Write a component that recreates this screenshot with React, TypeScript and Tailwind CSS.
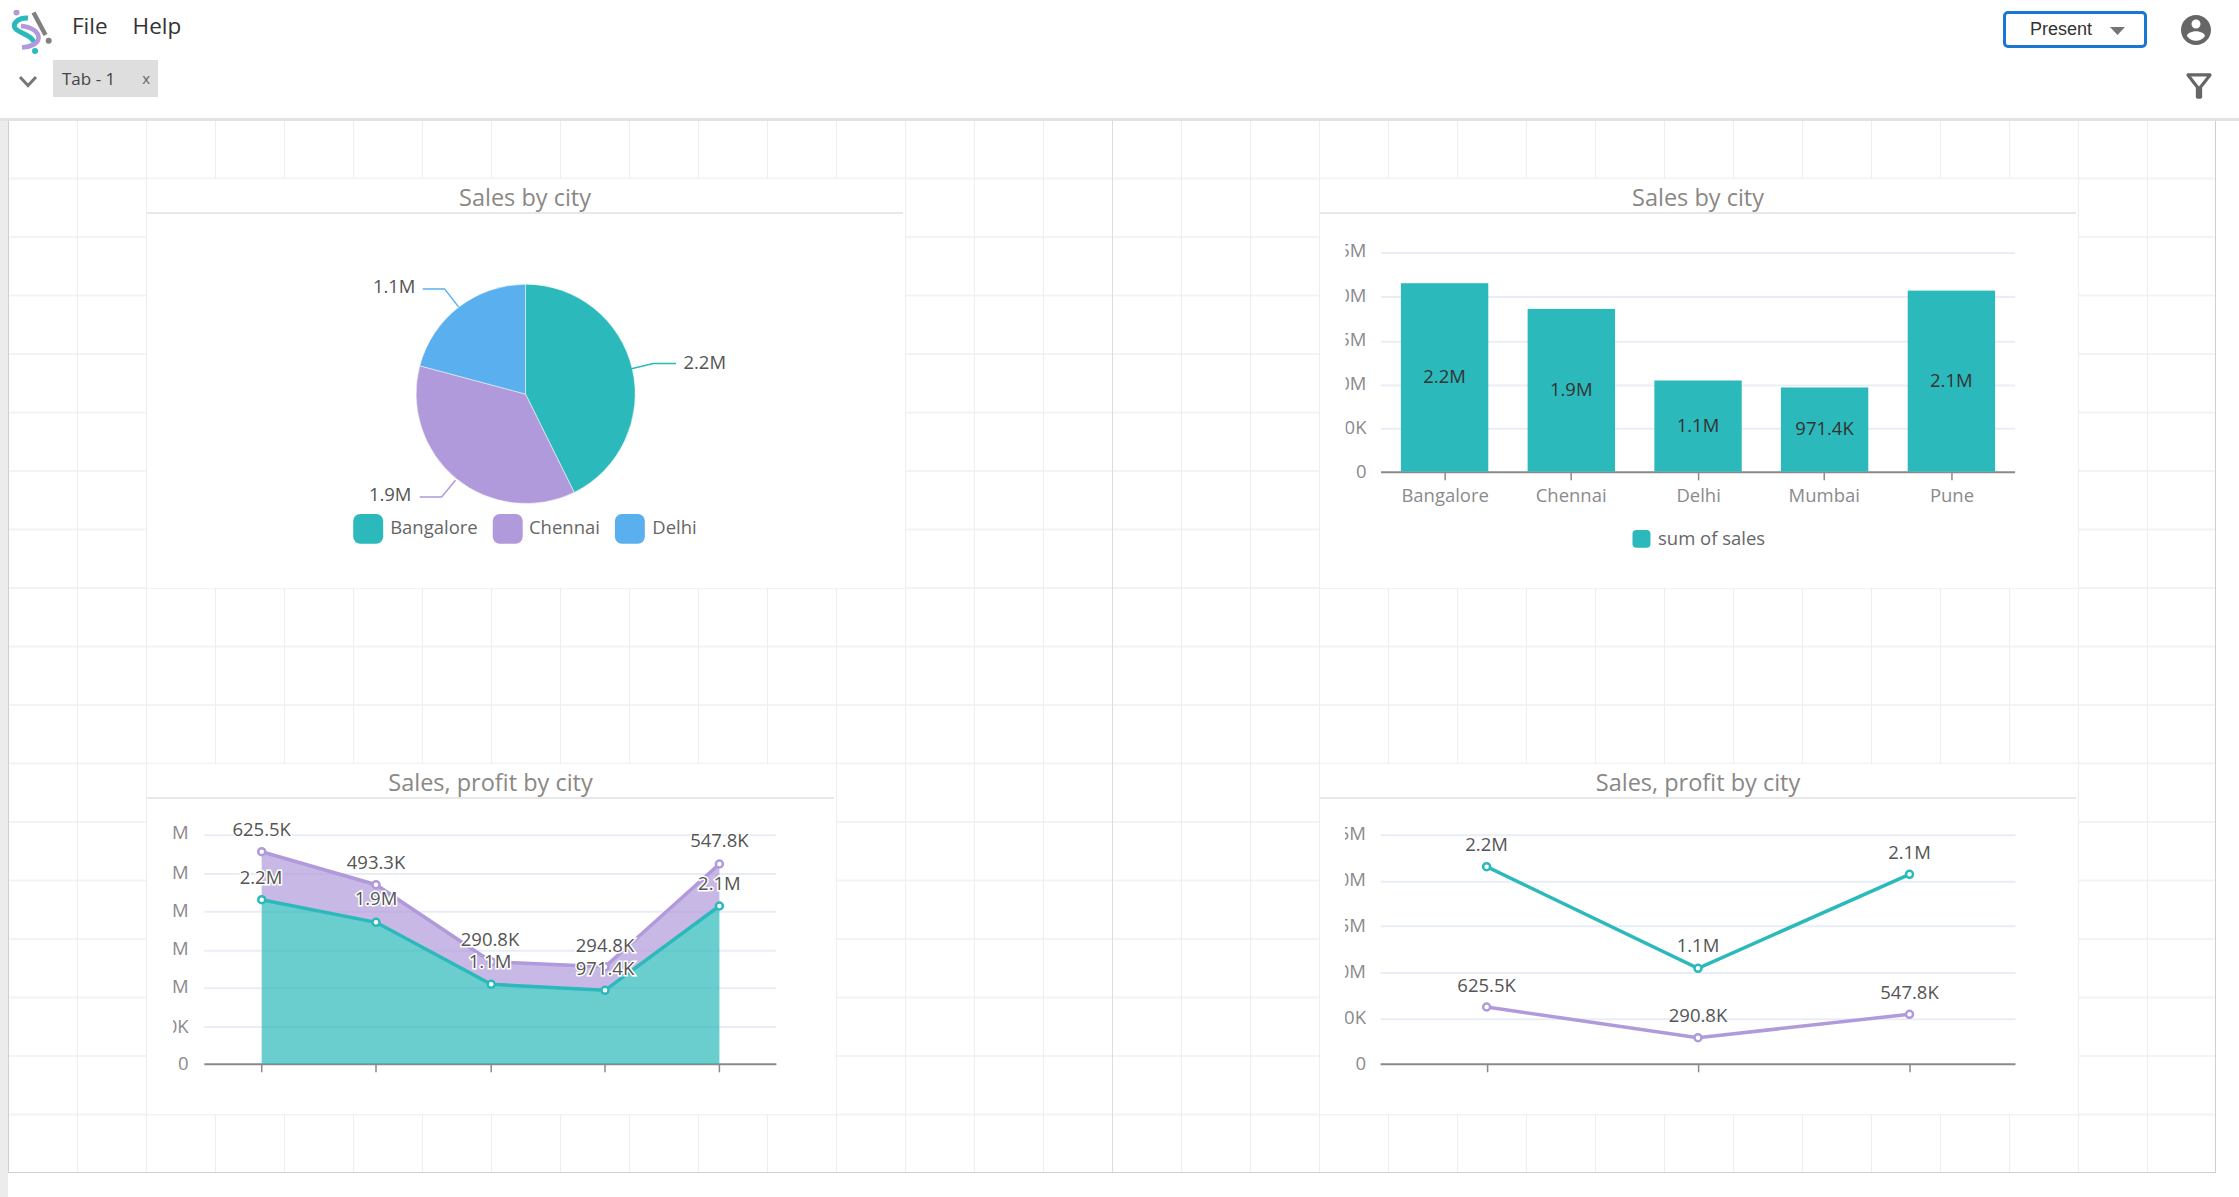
import React from 'react';

const TEAL = '#2bb9bb';
const PURPLE = '#b09adb';
const BLUE = '#5ab0ef';

type Pt = [number, number];

// Chart text, centred on the measured point by default
const Label: React.FC<{
    x: number;
    y: number;
    children: React.ReactNode;
    anchor?: 'start' | 'middle' | 'end';
    className?: string;
}> = ({ x, y, children, anchor = 'middle', className = 'fill-[#555]' }) => (
    <text x={x} y={y - 0.7} textAnchor={anchor} dominantBaseline="central" className={`text-[18.5px] ${className}`}>
        {children}
    </text>
);

// Label over the series with a white outline around the glyphs
const HaloLabel: React.FC<{ x: number; y: number; children: React.ReactNode }> = ({ x, y, children }) => (
    <text
        x={x}
        y={y - 0.7}
        textAnchor="middle"
        dominantBaseline="central"
        className="text-[18.5px] fill-[#555] stroke-white stroke-[3px] [paint-order:stroke]"
    >
        {children}
    </text>
);

const Card: React.FC<{
    title: string;
    className: string;
    box: [number, number, number, number];
    children: React.ReactNode;
}> = ({ title, className, box, children }) => (
    <div className={`flex flex-col bg-white mr-px mb-px ${className}`}>
        <div className="h-[35px] shrink-0 flex items-center justify-center border-b-2 border-[#e8e8e8] mr-[2px]">
            <span className="text-[23.5px] font-medium leading-none text-[#8a8784] mt-[5px]">{title}</span>
        </div>
        <svg className="block" width={box[2]} height={box[3]} viewBox={box.join(' ')}>
            {children}
        </svg>
    </div>
);

const Axis: React.FC<{ x1: number; x2: number; y: number; ticks: number[]; grid: number[] }> = ({ x1, x2, y, ticks, grid }) => (
    <g>
        {grid.map(g => (
            <line key={g} x1={x1} x2={x2} y1={g} y2={g} stroke="#e9edf6" strokeWidth={2} />
        ))}
        <line x1={x1} x2={x2} y1={y} y2={y} stroke="#8a8a8e" strokeWidth={2} />
        {ticks.map(t => (
            <line key={t} x1={t} x2={t} y1={y} y2={y + 8} stroke="#8a8a8e" strokeWidth={1.5} />
        ))}
    </g>
);

const Series: React.FC<{ points: Pt[]; color: string }> = ({ points, color }) => (
    <g>
        <polyline points={points.map(p => p.join(',')).join(' ')} fill="none" stroke={color} strokeWidth={3.5} />
        {points.map(p => (
            <circle key={p[0]} cx={p[0]} cy={p[1]} r={3.5} fill="#fff" stroke={color} strokeWidth={2.5} />
        ))}
    </g>
);

const PieCard = () => (
    <Card title="Sales by city" className="col-start-3 col-span-11 row-start-2 row-span-7" box={[147, 214, 758, 374]}>
        <path d="M525.5 394.3 L525.5 284.3 A110 110 0 0 1 574.3 492.8 Z" fill={TEAL} stroke="#fff" strokeWidth={0.5} />
        <path d="M525.5 394.3 L574.3 492.8 A110 110 0 0 1 419.6 366 Z" fill={PURPLE} stroke="#fff" strokeWidth={0.5} />
        <path d="M525.5 394.3 L419.6 366 A110 110 0 0 1 525.5 284.3 Z" fill={BLUE} stroke="#fff" strokeWidth={0.5} />
        <polyline points="422.6,289 444.5,289 458.4,307" fill="none" stroke={BLUE} strokeWidth={1.5} />
        <polyline points="631.6,369 653.4,363.7 676.3,363.7" fill="none" stroke={TEAL} strokeWidth={1.5} />
        <polyline points="419.6,497.3 441.5,497.3 455.4,480.7" fill="none" stroke={PURPLE} strokeWidth={1.5} />
        <Label x={394} y={286.7}>1.1M</Label>
        <Label x={705} y={362.3}>2.2M</Label>
        <Label x={390} y={495}>1.9M</Label>
        <rect x={353} y={514.3} width={30} height={30} rx={7} fill={TEAL} />
        <Label x={390} y={528} anchor="start" className="fill-[#666]">Bangalore</Label>
        <rect x={492.7} y={514.3} width={30} height={30} rx={7} fill={PURPLE} />
        <Label x={529} y={528} anchor="start" className="fill-[#666]">Chennai</Label>
        <rect x={615} y={514.3} width={30} height={30} rx={7} fill={BLUE} />
        <Label x={652.5} y={528} anchor="start" className="fill-[#666]">Delhi</Label>
    </Card>
);

const bars = [
    { name: 'Bangalore', x: 1400.5, top: 283.3, tick: 1444.8, value: '2.2M', labelY: 376 },
    { name: 'Chennai', x: 1527.4, top: 309, tick: 1571, value: '1.9M', labelY: 389 },
    { name: 'Delhi', x: 1654.3, top: 380.7, tick: 1698.6, value: '1.1M', labelY: 425.3 },
    { name: 'Mumbai', x: 1781, top: 387.7, tick: 1824.4, value: '971.4K', labelY: 428.3 },
    { name: 'Pune', x: 1908, top: 290.7, tick: 1952.3, value: '2.1M', labelY: 380 },
];

const BarCard = () => (
    <Card title="Sales by city" className="col-start-20 col-span-11 row-start-2 row-span-7" box={[1320, 214, 758, 374]}>
        <defs>
            <clipPath id="bar-y">
                <rect x={1345} y={214} width={40} height={300} />
            </clipPath>
        </defs>
        <Axis x1={1380.6} x2={2015.5} y={472.7} ticks={bars.map(b => b.tick)} grid={[253, 297, 342, 385.7, 429]} />
        <g clipPath="url(#bar-y)">
            <Label x={1366} y={250.7} anchor="end" className="fill-[#8a8a8e]">2.5M</Label>
            <Label x={1366} y={295.7} anchor="end" className="fill-[#8a8a8e]">2.0M</Label>
            <Label x={1366} y={339} anchor="end" className="fill-[#8a8a8e]">1.5M</Label>
            <Label x={1366} y={383} anchor="end" className="fill-[#8a8a8e]">1.0M</Label>
            <Label x={1366} y={427.7} anchor="end" className="fill-[#8a8a8e]">500.0K</Label>
            <Label x={1366} y={471.7} anchor="end" className="fill-[#8a8a8e]">0</Label>
        </g>
        {bars.map(b => (
            <g key={b.name}>
                <rect x={b.x} y={b.top} width={87.5} height={472 - b.top} fill={TEAL} />
                <Label x={b.x + 43.7} y={b.labelY} className="fill-[#333]">{b.value}</Label>
                <Label x={b.tick} y={495.7} className="fill-[#8a8a8e]">{b.name}</Label>
            </g>
        ))}
        <rect x={1632.4} y={530.3} width={18} height={18} rx={4} fill={TEAL} />
        <Label x={1658} y={538.3} anchor="start" className="fill-[#666]">sum of sales</Label>
    </Card>
);

const areaTeal: Pt[] = [[261.7, 899.7], [376, 922.3], [491.2, 984.3], [605, 990.3], [719.4, 906]];
const areaPurple: Pt[] = [[261.7, 851.7], [376, 884.7], [491.2, 961.7], [605, 966.7], [719.4, 864]];

const toPoints = (pts: Pt[]) => pts.map(p => p.join(',')).join(' ');

const AreaCard = () => (
    <Card title="Sales, profit by city" className="col-start-3 col-span-10 row-start-12 row-span-6" box={[147, 799, 689, 315]}>
        <defs>
            <clipPath id="area-y">
                <rect x={173} y={799} width={30} height={300} />
            </clipPath>
            <clipPath id="area-plot">
                <rect x={147} y={823} width={689} height={290} />
            </clipPath>
        </defs>
        <Axis x1={204.3} x2={776.4} y={1064.3} ticks={areaTeal.map(p => p[0])} grid={[835.3, 874, 911.7, 950.7, 988.3, 1027]} />
        <g clipPath="url(#area-y)">
            {[['3.0M', 832], ['2.5M', 871.7], ['2.0M', 910], ['1.5M', 947.7], ['1.0M', 986], ['500.0K', 1025.7], ['0', 1062.7]].map(([t, y]) => (
                <Label key={t} x={188.7} y={Number(y)} anchor="end" className="fill-[#8a8a8e]">{t}</Label>
            ))}
        </g>
        <polygon points={`${toPoints(areaPurple)} ${toPoints([...areaTeal].reverse())}`} fill={PURPLE} fillOpacity={0.7} />
        <polygon points={`${toPoints(areaTeal)} 719.4,1064 261.7,1064`} fill={TEAL} fillOpacity={0.7} />
        <Series points={areaPurple} color={PURPLE} />
        <Series points={areaTeal} color={TEAL} />
        <g clipPath="url(#area-plot)">
            <HaloLabel x={261.7} y={829}>625.5K</HaloLabel>
            <HaloLabel x={261} y={876.7}>2.2M</HaloLabel>
            <HaloLabel x={376} y={861.7}>493.3K</HaloLabel>
            <HaloLabel x={376} y={898}>1.9M</HaloLabel>
            <HaloLabel x={490} y={938.7}>290.8K</HaloLabel>
            <HaloLabel x={490} y={961}>1.1M</HaloLabel>
            <HaloLabel x={605} y={945}>294.8K</HaloLabel>
            <HaloLabel x={605} y={968}>971.4K</HaloLabel>
            <HaloLabel x={719.4} y={840.3}>547.8K</HaloLabel>
            <HaloLabel x={719.4} y={882.7}>2.1M</HaloLabel>
        </g>
    </Card>
);

const LineCard = () => (
    <Card title="Sales, profit by city" className="col-start-20 col-span-11 row-start-12 row-span-6" box={[1320, 799, 758, 315]}>
        <defs>
            <clipPath id="line-y">
                <rect x={1345} y={799} width={40} height={300} />
            </clipPath>
        </defs>
        <Axis x1={1380.6} x2={2015.5} y={1064.3} ticks={[1487.6, 1698.6, 1910]} grid={[835.3, 881.7, 926.3, 973, 1019.3]} />
        <g clipPath="url(#line-y)">
            {[['2.5M', 832.7], ['2.0M', 879], ['1.5M', 925], ['1.0M', 971], ['500.0K', 1017], ['0', 1063]].map(([t, y]) => (
                <Label key={t} x={1366} y={Number(y)} anchor="end" className="fill-[#8a8a8e]">{t}</Label>
            ))}
        </g>
        <Series points={[[1486.6, 866.7], [1698, 968.3], [1909.5, 874.3]]} color={TEAL} />
        <Series points={[[1486.6, 1007], [1698, 1037.7], [1909.5, 1014.3]]} color={PURPLE} />
        <Label x={1486.6} y={843.7}>2.2M</Label>
        <Label x={1698} y={944.7}>1.1M</Label>
        <Label x={1909.5} y={852}>2.1M</Label>
        <Label x={1486.6} y={984.7}>625.5K</Label>
        <Label x={1698} y={1015}>290.8K</Label>
        <Label x={1909.5} y={991.7}>547.8K</Label>
    </Card>
);

const Logo = () => (
    <svg width={44} height={44} viewBox="0 0 44 44" fill="none" className="shrink-0">
        <circle cx={6.5} cy={2.5} r={3} fill={PURPLE} />
        <path d="M18 8 C9 7.5 3.5 12 4.5 17 C6 23 20 23 24 32" stroke={TEAL} strokeWidth={5} />
        <path d="M11 16 C22 17 29 22 28.5 28.5 C28 34 20 37 12 37.5" stroke={PURPLE} strokeWidth={4.5} />
        <circle cx={25} cy={41} r={3} fill={TEAL} />
        <path d="M23.5 2.5 L35.5 25" stroke="#808080" strokeWidth={4.5} />
        <circle cx={38.7} cy={30.7} r={3} fill="#808080" />
    </svg>
);

export default function App() {
    return (
        <div className="w-[2239px] h-[1197px] flex flex-col overflow-hidden bg-white font-['Open_Sans',sans-serif]">
            <header className="h-[120.5px] shrink-0 flex flex-col border-b-[3px] border-[#e2e2e2]">
                <div className="h-[55px] shrink-0 flex items-start">
                    <div className="ml-[10px] mt-[10px]">
                        <Logo />
                    </div>
                    <nav className="flex gap-[25px] ml-[18px] mt-[10px] text-[22.5px] leading-[32px] text-[#333]">
                        <span>File</span>
                        <span>Help</span>
                    </nav>
                    <div className="ml-auto mt-[11px] w-[144px] h-[37px] flex items-center border-[3px] border-[#1976d2] rounded-[5px] font-['Liberation_Sans',sans-serif] text-[18px] text-[#333]">
                        <span className="ml-[24px]">Present</span>
                        <svg width={15} height={8} viewBox="0 0 15 8" className="ml-[18px] mt-[2px]">
                            <path d="M0 0 H15 L7.5 8 Z" fill="#757575" />
                        </svg>
                    </div>
                    <svg width={36} height={36} viewBox="0 0 24 24" fill="#666" className="ml-[31px] mt-[12px] mr-[25px]">
                        <path d="M12 2C6.48 2 2 6.48 2 12s4.48 10 10 10 10-4.48 10-10S17.52 2 12 2zm0 3c1.66 0 3 1.34 3 3s-1.34 3-3 3-3-1.34-3-3 1.34-3 3-3zm0 14.2c-2.5 0-4.71-1.28-6-3.22.03-1.99 4-3.08 6-3.08 1.99 0 5.97 1.09 6 3.08-1.29 1.94-3.5 3.22-6 3.22z" />
                    </svg>
                </div>
                <div className="flex items-start">
                    <svg width={20} height={13} viewBox="0 0 20 13" fill="none" className="ml-[18px] mt-[20px]">
                        <path d="M2 2 L10 10.5 L18 2" stroke="#777" strokeWidth={3} />
                    </svg>
                    <div className="ml-[15px] mt-[5px] w-[105px] h-[37px] flex items-center bg-[#dedede] text-[17px] text-[#444]">
                        <span className="ml-[9px]">Tab - 1</span>
                        <span className="ml-auto mr-[8px] text-[15px] text-[#666]">x</span>
                    </div>
                    <svg width={38} height={38} viewBox="0 0 24 24" fill="#666" className="ml-auto mr-[21px] mt-[12px]">
                        <path d="M7 6h10l-5.01 6.3L7 6zm-2.75-.39C6.27 8.2 10 13 10 13v6c0 .55.45 1 1 1h2c.55 0 1-.45 1-1v-6s3.72-4.8 5.74-7.39c.51-.66.04-1.61-.79-1.61H5.04c-.83 0-1.3.95-.79 1.61z" />
                    </svg>
                </div>
            </header>
            <main className="flex-1 flex min-h-0">
                <div className="w-[8px] shrink-0 bg-[#ececec]" />
                <div className="w-[2208px] h-[1052px] shrink-0 border-l border-r border-b border-[#cfcfcf] overflow-hidden bg-white bg-[linear-gradient(to_right,transparent_1103px,#dddddd_1103px,#dddddd_1104px,transparent_1104px),linear-gradient(to_right,transparent_68px,#eeeeee_68px),linear-gradient(to_bottom,transparent_57px,#f3f3f3_57px)] bg-[size:100%_100%,69px_58.5px,69px_58.5px]">
                    <div className="grid grid-cols-[repeat(32,69px)] grid-rows-[repeat(18,58.5px)]">
                        <PieCard />
                        <BarCard />
                        <AreaCard />
                        <LineCard />
                    </div>
                </div>
            </main>
        </div>
    );
}
